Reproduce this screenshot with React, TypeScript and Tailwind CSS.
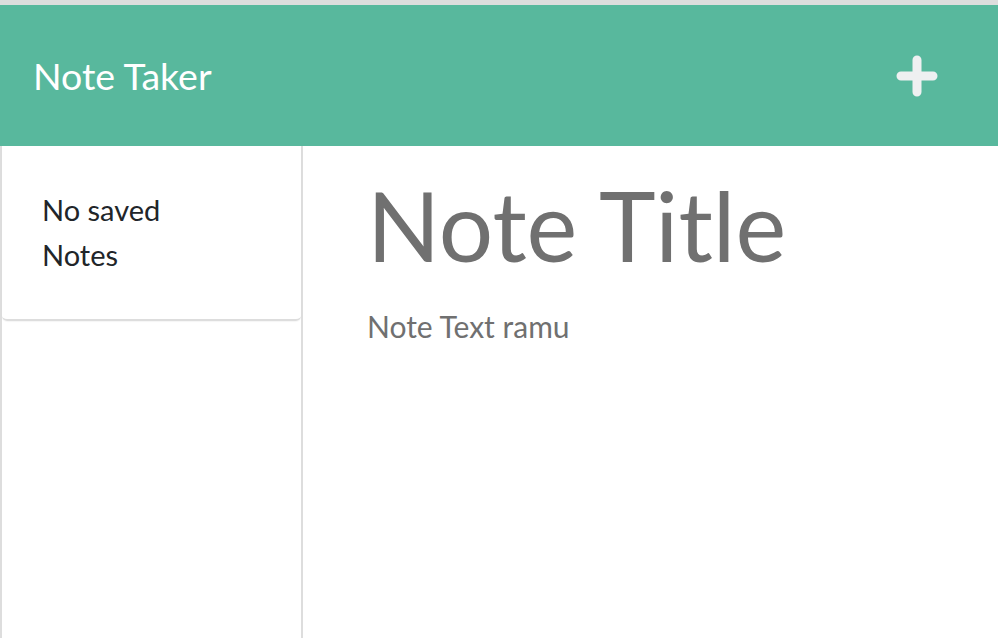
export default function App() {
  return (
    <div className="flex h-[638px] w-full flex-col overflow-hidden bg-white font-['Lato','Noto_Sans',sans-serif]">
      <div className="h-[5px] bg-[#dddddd]" />
      <header className="flex h-[141px] items-center justify-between bg-[#58b89d] pl-[33px] pr-[60px]">
        <h1 className="text-[37.5px] leading-none text-white">Note Taker</h1>
        <svg width="42" height="42" viewBox="0 0 42 42" aria-label="New note">
          <path d="M21 5v32M5 21h32" stroke="#eef0f1" strokeWidth="9" strokeLinecap="round" />
        </svg>
      </header>
      <div className="flex flex-1">
        <aside className="w-[303px] border-l-2 border-r-2 border-[#dddddd]">
          <div className="rounded-b-[5px] border-b-2 border-[#dddddd] px-[40px] pt-[41px] pb-[42px] shadow-[0_1px_1px_rgba(0,0,0,0.04)]">
            <p className="text-[29px] leading-[45px] text-[#212529]">
              No saved
              <br />
              Notes
            </p>
          </div>
        </aside>
        <main className="flex-1 pl-[64px] pt-[26px]">
          <h2 className="text-[96px] leading-[106px] text-[#707070]">Note Title</h2>
          <p className="mt-[28px] text-[30px] leading-[40px] text-[#707070]">Note Text ramu</p>
        </main>
      </div>
    </div>
  );
}
